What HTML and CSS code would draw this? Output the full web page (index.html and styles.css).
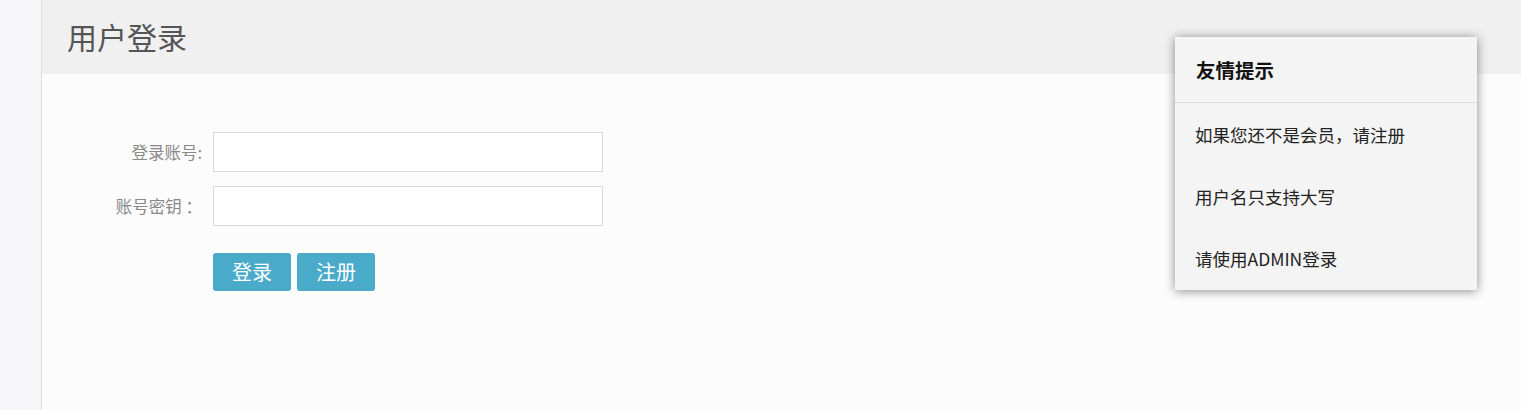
FILE: index.html
```html
<!DOCTYPE html>
<html lang="zh-CN">
<head>
<meta charset="utf-8">
<title>用户登录</title>
<link rel="stylesheet" href="styles.css">
</head>
<body>
<div class="layout">
  <aside class="sidebar"></aside>
  <main class="main">
    <header class="page-header">
      <h1 class="page-title">用户登录</h1>
    </header>
    <form class="login-form">
      <div class="form-row">
        <label class="form-label">登录账号:</label>
        <input class="form-input" type="text">
      </div>
      <div class="form-row">
        <label class="form-label">账号密钥 ：</label>
        <input class="form-input" type="password">
      </div>
      <div class="form-actions">
        <button type="button" class="btn">登录</button>
        <button type="button" class="btn">注册</button>
      </div>
    </form>
  </main>
</div>
<div class="tips">
  <div class="tips-title">友情提示</div>
  <ul class="tips-list">
    <li>如果您还不是会员，请注册</li>
    <li>用户名只支持大写</li>
    <li>请使用ADMIN登录</li>
  </ul>
</div>
</body>
</html>
```
FILE: styles.css
```css
* { box-sizing: border-box; }
html, body {
  margin: 0;
  padding: 0;
  height: 100%;
}
body {
  font-family: "Noto Sans CJK SC", "Liberation Sans", sans-serif;
  background: #fcfcfc;
  overflow: hidden;
}
.layout {
  display: flex;
  height: 410px;
}
.sidebar {
  width: 42px;
  flex: none;
  background: #f6f6f8;
  border-right: 1px solid #dedede;
}
.main {
  flex: 1;
  background: #fcfcfc;
}
.page-header {
  height: 74px;
  background: #f0f0f0;
  display: flex;
  align-items: center;
  padding-left: 25px;
}
.page-title {
  margin: 0;
  font-weight: 400;
  font-size: 30px;
  color: #555;
  line-height: 1;
  padding-bottom: 3px;
}
.login-form {
  padding-top: 58px;
}
.form-row {
  display: flex;
  align-items: center;
  margin-bottom: 14px;
}
.form-label {
  width: 160px;
  text-align: right;
  font-size: 16.5px;
  color: #888;
  margin-right: 11px;
}
.form-input {
  width: 390px;
  height: 40px;
  border: 1px solid #d8d8d8;
  background: #fff;
  outline: none;
  padding: 0 8px;
  font-size: 15px;
}
.form-actions {
  display: flex;
  gap: 6px;
  padding-left: 171px;
  margin-top: 27px;
}
.btn {
  height: 38px;
  padding: 0 19px;
  border: none;
  border-radius: 3px;
  background: #4aaac9;
  color: #fff;
  font-family: "Noto Sans CJK SC", "Liberation Sans", sans-serif;
  font-size: 20px;
  line-height: 38px;
}
.tips {
  position: absolute;
  left: 1175px;
  top: 37px;
  width: 302px;
  height: 253px;
  background: #f4f4f4;
  box-shadow: 0 1px 10px rgba(0, 0, 0, 0.45);
}
.tips-title {
  height: 66px;
  border-bottom: 1px solid #dcdcdc;
  padding-left: 21px;
  font-size: 19.5px;
  font-weight: 700;
  color: #111;
  display: flex;
  align-items: center;
}
.tips-list {
  list-style: none;
  margin: 0;
  padding: 0;
}
.tips-list li {
  height: 62px;
  display: flex;
  align-items: center;
  padding-left: 20px;
  font-size: 17.5px;
  color: #222;
}
```
